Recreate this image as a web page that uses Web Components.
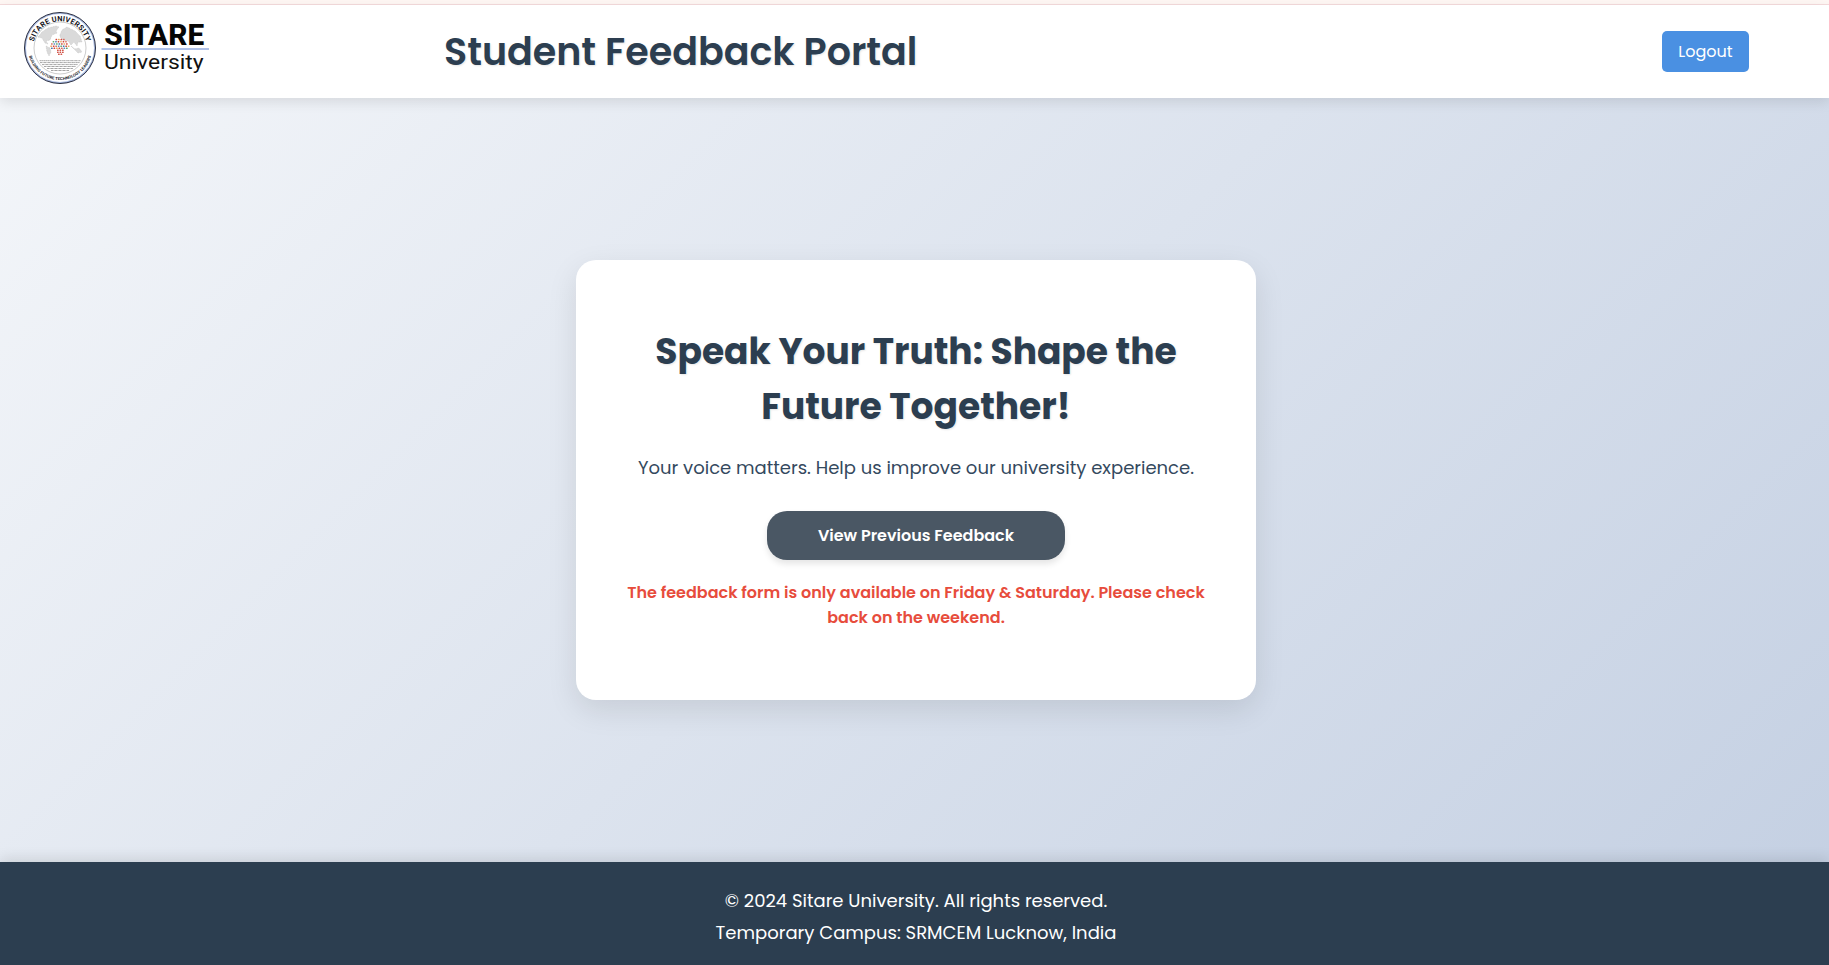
<!DOCTYPE html>
<html lang="en">
<head>
<meta charset="utf-8">
<title>Student Feedback Portal</title>
<style>
html,body{margin:0;height:100%}
body{font-family:Poppins,Inter,"Open Sans",sans-serif;color:#2c3e50;background:#fff;overflow:hidden}
</style>
</head>
<body>
<portal-page>
  <portal-header slot="header">
    <sitare-logo slot="logo"></sitare-logo>
    <span slot="title">Student Feedback Portal</span>
    <portal-button slot="action" kind="logout">Logout</portal-button>
  </portal-header>
  <feedback-card>
    <span slot="heading">Speak Your Truth: Shape the Future Together!</span>
    <span slot="lead">Your voice matters. Help us improve our university experience.</span>
    <portal-button slot="action" kind="view">View Previous Feedback</portal-button>
    <span slot="notice">The feedback form is only available on Friday &amp; Saturday. Please check back on the weekend.</span>
  </feedback-card>
  <portal-footer slot="footer">
    <span>© 2024 Sitare University. All rights reserved.</span>
    <span>Temporary Campus: SRMCEM Lucknow, India</span>
  </portal-footer>
</portal-page>
<script>
function define(name, html) {
  customElements.define(name, class extends HTMLElement {
    constructor() {
      super();
      this.attachShadow({ mode: 'open' }).innerHTML = html;
    }
  });
}

define('portal-page', `<style>
:host{display:flex;flex-direction:column;height:100vh;background:linear-gradient(135deg,#f5f7fa 0%,#c3cfe2 100%)}
.strip{height:4px;flex:none;background:#fff7f4;border-bottom:1px solid #f5dcdd}
main{flex:1;display:flex;justify-content:center;align-items:center;padding-left:3px}
</style><div class="strip"></div><slot name="header"></slot><main><slot></slot></main><slot name="footer"></slot>`);

define('portal-header', `<style>
:host{display:flex;flex:none;align-items:center;height:93px;background:#fff;box-shadow:0 4px 12px rgba(0,0,0,.1);position:relative;padding:0 80px 0 20px;box-sizing:border-box}
.title{margin-left:228px;flex:1;font-size:38px;line-height:57px;font-weight:600;text-shadow:1px 1px 2px rgba(0,0,0,.1)}
</style><slot name="logo"></slot><div class="title"><slot name="title"></slot></div><slot name="action"></slot>`);

define('portal-button', `<style>
:host{display:flex;justify-content:center;align-items:center;box-sizing:border-box;color:#fff;font-size:16px;line-height:25px}
:host([kind=logout]){width:87px;height:41px;border-radius:5px;background:#4a90e2}
:host([kind=view]){width:298px;height:49px;border-radius:20px;background:#4a5764;font-weight:600;box-shadow:0 4px 6px rgba(0,0,0,.1)}
</style><slot></slot>`);

define('feedback-card', `<style>
:host{display:flex;flex-direction:column;align-items:center;box-sizing:border-box;width:680px;height:440px;padding:64px 50px 0;background:#fff;border-radius:20px;box-shadow:0 10px 30px rgba(0,0,0,.1);text-align:center}
.heading{font-size:36px;line-height:55px;font-weight:700;text-shadow:1px 1px 2px rgba(0,0,0,.1)}
.lead{margin:20px 0 29px;font-size:18px;line-height:28px;color:#34495e;white-space:nowrap}
.notice{margin-top:20px;line-height:25px;font-weight:600;color:#e74c3c}
</style><div class="heading"><slot name="heading"></slot></div><div class="lead"><slot name="lead"></slot></div><slot name="action"></slot><div class="notice"><slot name="notice"></slot></div>`);

define('portal-footer', `<style>
:host{display:flex;flex:none;flex-direction:column;align-items:center;box-sizing:border-box;height:103px;padding:23px 0 0 3px;background:#2c3e50;color:#fff;font-size:18px;line-height:32px;box-shadow:0 -4px 12px rgba(0,0,0,.1);position:relative}
</style><slot></slot>`);

/* Tiles of the tree crown and trunk: [y, first x, count] per row. */
const tileColors = ['#d2463c', '#5b8fc4', '#e8a55c', '#62a868', '#d2463c', '#4676ad', '#d9685c'];
const tiles = [[38.8, 55.5, 4], [41, 52.6, 6], [43.2, 51, 7], [45.4, 50.3, 8], [47.6, 51, 7],
  [49.6, 57, 3], [51.6, 57, 3], [53.6, 58, 2]]
  .map(([y, x, n], row) => Array.from({ length: n }, (_, i) => {
    const color = row > 4 ? '#d2554a' : tileColors[(row * 3 + i * 2) % 7];
    return `<rect x="${(x + i * 2.5).toFixed(1)}" y="${y}" width="1.7" height="1.5" rx=".4" fill="${color}"/>`;
  }).join('')).join('');

define('sitare-logo', `<style>
:host{display:block;width:196px;height:85px;font-family:Roboto,sans-serif}
svg{display:block}
</style>
<svg width="196" height="85" viewBox="20 9 196 85">
<defs>
<path id="top" d="M33.2 48A26.8 26.8 0 0 1 86.8 48"/>
<path id="bottom" d="M28 48A32 32 0 0 0 92 48"/>
</defs>
<circle cx="60" cy="48" r="34.8" fill="#fff" stroke="#a9bbe2" stroke-width="1.6"/>
<circle cx="60" cy="48" r="35.5" fill="none" stroke="#2b2e3e" stroke-width="1"/>
<circle cx="60" cy="48" r="26" fill="none" stroke="#999" stroke-width=".5"/>
<text font-size="7.4" font-weight="700" fill="#15151c"><textPath href="#top" startOffset="50%" text-anchor="middle" textLength="71">SITARE UNIVERSITY</textPath></text>
<text font-size="4" font-weight="700" fill="#26262e"><textPath href="#bottom" startOffset="50%" text-anchor="middle" textLength="84" lengthAdjust="spacingAndGlyphs">BUILDING FUTURE TECHNOLOGY LEADERS</textPath></text>
<g fill="#dadada" stroke="#bdbdbd" stroke-width=".5" stroke-dasharray="1 .7">
<path d="M38 37l4-5 6-4 8-2 3 1-3 4 1 2-5 2-2 5-4 1 2 3-3-1-3-5z"/>
<path d="M46 46l4 2 1 4-2 4-2-4z"/>
<path d="M60 35l2-5 5-3 8 4 5 5 2 6-4 0-1 4-3-4-3 3-3-4-5-1-3-3z"/>
<path d="M71 46l4 3 4-1 3 4-4 1z"/>
</g>
${tiles}
<g stroke="#a5a5a5" stroke-width="1" stroke-dasharray="2.2 .35 1.1 .3">
<path d="M39.5 60.7h41M40 62.6h40M42 64.6h36M44 66.5h32M47 68.5h26M51 70.5h18"/>
</g>
<text x="104.3" y="45.2" font-size="29.6" font-weight="800" textLength="99.8" lengthAdjust="spacingAndGlyphs" fill="#050505">SITARE</text>
<path d="M101.5 49h107.5" stroke="#afc1e8" stroke-width="2"/>
<text x="103.9" y="68.5" font-size="20.8" textLength="99.8" lengthAdjust="spacingAndGlyphs" fill="#111">University</text>
</svg>`);
</script>
</body>
</html>
